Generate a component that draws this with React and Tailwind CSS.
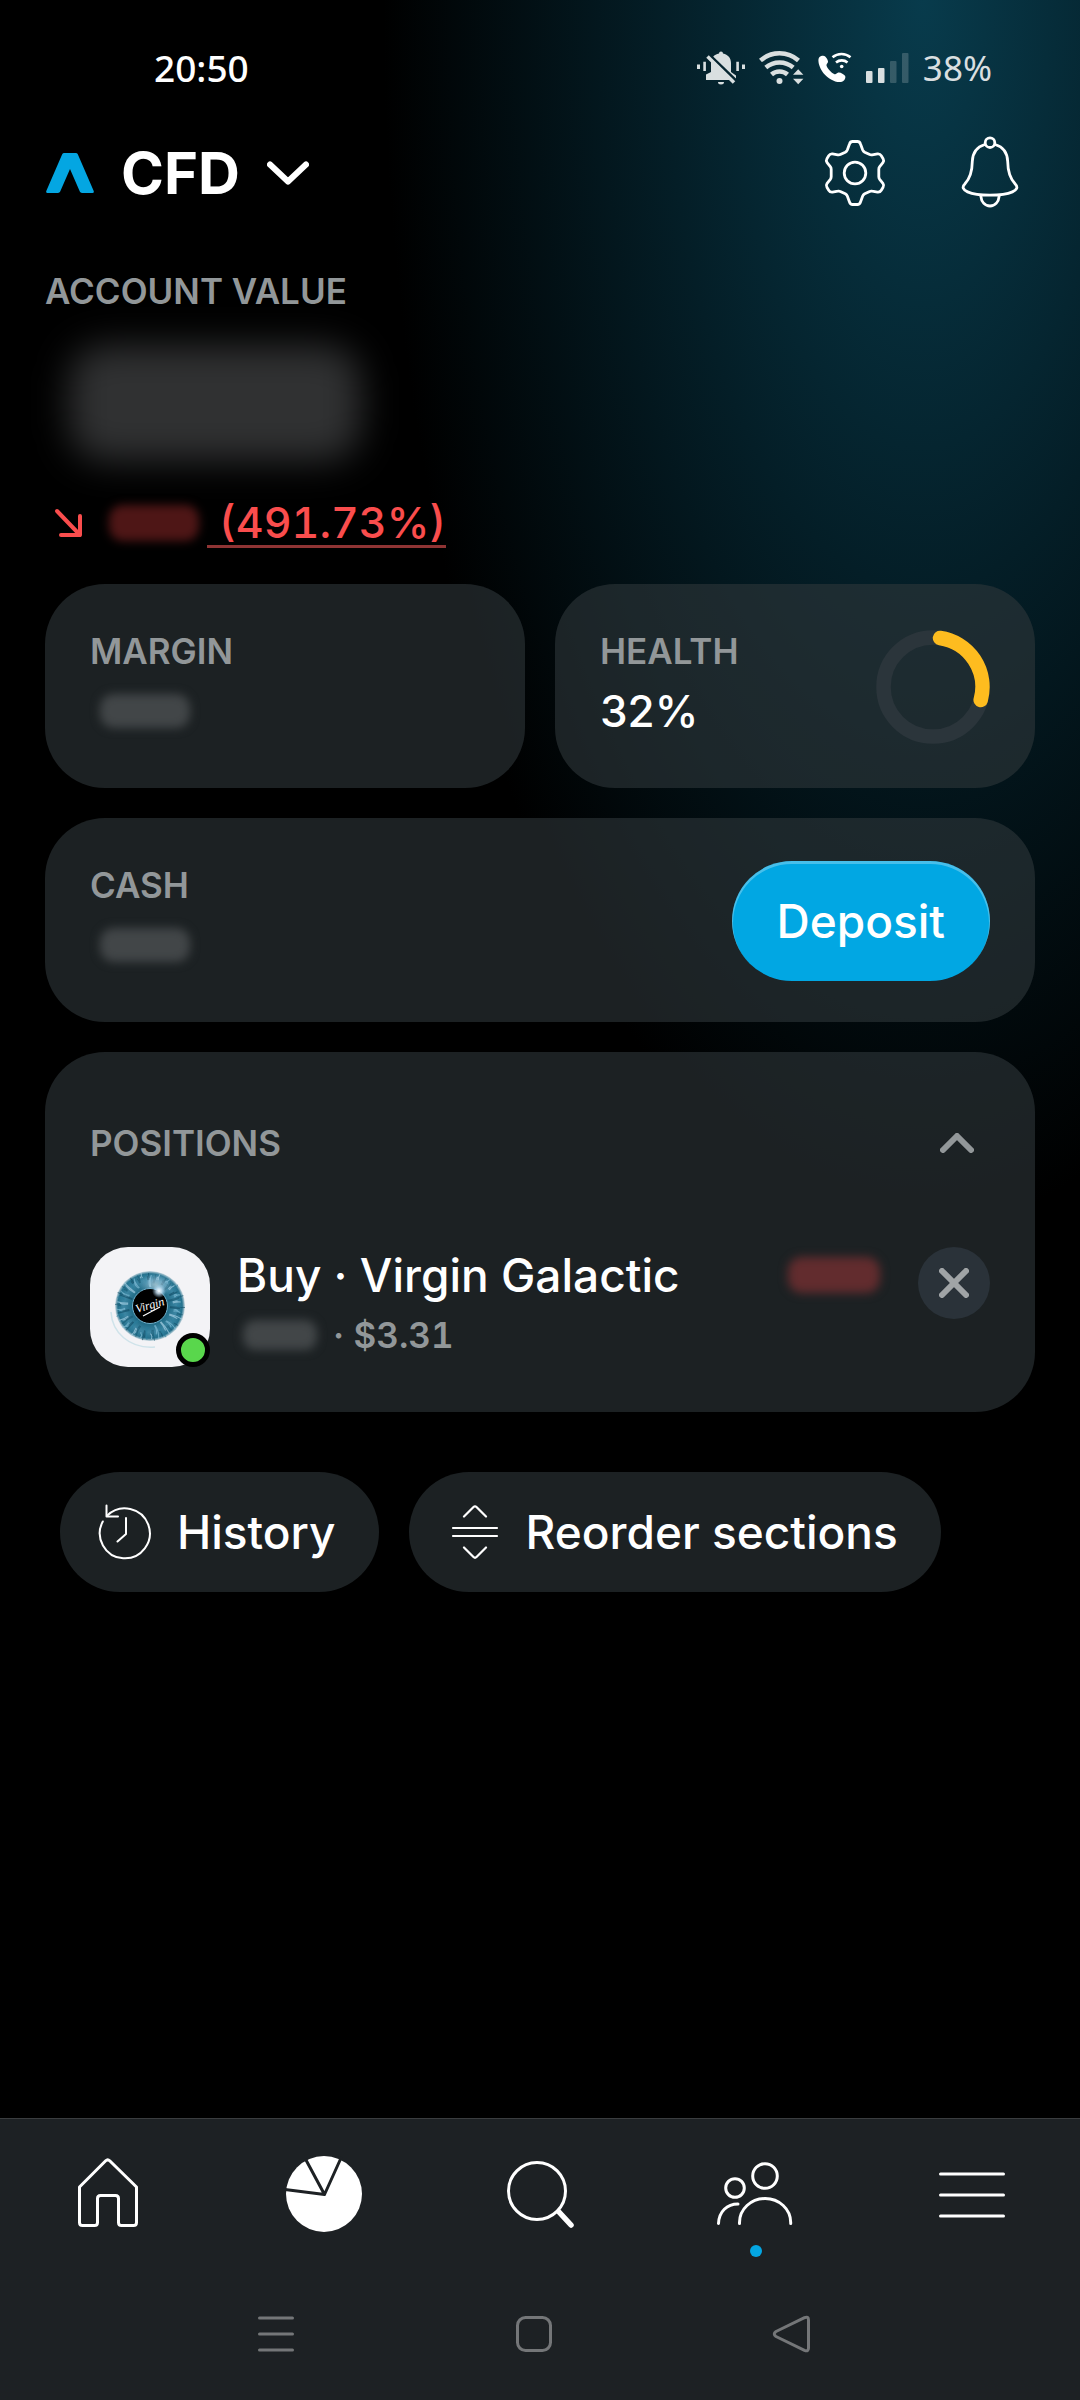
import { useState } from 'react';
import clsx from 'clsx';

const card = 'rounded-[60px] bg-[rgba(46,55,58,0.6)]';
const label = 'text-[35px] leading-[48px] font-semibold text-[#929799]';

/* Status bar icons */

const MutedBellIcon = () => (
    <svg width="48" height="34" viewBox="0 0 48 34" fill="#d9dfe0">
        <mask id="slash">
            <rect width="48" height="34" fill="#fff" />
            <path d="M12 3.5 40 30.5" stroke="#000" strokeWidth="3" />
        </mask>
        <g mask="url(#slash)">
            <path d="M22 2.6a2 2 0 0 1 4 0c5 1 8 4.600 8 9.400v9l5 3.500V29H9v-5.500L14 21v-9c0-5 3-8.400 8-9.400Z" />
        </g>
        <path d="M21 31h6a3 2.500 0 0 1-6 0Z" />
        <path d="m10.500 5.500 26.500 26" stroke="#d9dfe0" strokeWidth="3.500" />
        <path d="M0 13.500h3v4.500H0zM6.300 10.700h2.600V20H6.300zM39.300 10.700h2.600V20h-2.600zM45 13.500h3v4.500h-3z" />
    </svg>
);

const WifiIcon = () => (
    <svg width="45" height="36" viewBox="0 0 45 36" fill="none" stroke="#d9dfe0" strokeWidth="4.500">
        <path d="M1.500 10.500a28.500 28.500 0 0 1 38 0" />
        <path d="M6.800 17.500a21 21 0 0 1 27.400 0" />
        <path d="M12.500 24.500a12 12 0 0 1 16 0" />
        <circle cx="20.500" cy="31" r="3" fill="#d9dfe0" stroke="none" />
        <path d="m39.200 19.300 5.200 5.500H34zM39.200 34.300l5.200-5.500H34z" fill="#d9dfe0" stroke="none" />
    </svg>
);

const WifiCallIcon = () => (
    <svg width="34" height="32" viewBox="0 0 34 32" fill="none" stroke="#fff">
        <path
            d="M1.500 5C3 3.600 6 3.300 7.200 4.400c1.600 1.500 3 4 2.800 5.600-.2 1.400-1.700 2-1.500 3.400.5 2.700 4.800 7.300 8 8.800 1.500.6 2.200-1.200 3.800-1.700 2-.5 5.600 1.700 6.700 3.300 1.200 2-.6 5-3 6-6 1.600-13.500-3-18.500-8.600C1.800 16.500-1.300 8 1.500 5Z"
            fill="#fff"
            stroke="none"
        />
        <path d="M14.500 5.300a14 14 0 0 1 18 0M18 10.500a9 9 0 0 1 11.500 0" strokeWidth="2.600" />
        <circle cx="23.700" cy="14.500" r="1.800" fill="#fff" stroke="none" />
    </svg>
);

const SignalIcon = () => (
    <svg width="43" height="30" viewBox="0 0 43 30">
        <g fill="#d9dfe0">
            <rect y="18" width="6.500" height="12" rx="1" />
            <rect x="12" y="15" width="6.500" height="15" rx="1" />
        </g>
        <g fill="#d9dfe0" fillOpacity="0.22">
            <rect x="24" y="8" width="6.500" height="22" rx="1" />
            <rect x="36" y="0" width="6.500" height="30" rx="1" />
        </g>
    </svg>
);

/* Header icons */

const BrandMark = () => (
    <svg width="48" height="40" viewBox="0 0 48 40">
        <path d="M18.200 0h11.600q1.400 0 2 1.300l15.800 36.500Q48.400 40 46.400 40H36q-1.600 0-2.200-1.400L24 16l-9.800 22.600Q13.600 40 12 40H1.600Q-.4 40 .4 37.800L16.200 1.300Q16.800 0 18.200 0Z" fill="#04a6e2" />
    </svg>
);

const GearIcon = () => (
    <svg width="84" height="84" viewBox="0 0 84 84" fill="none" stroke="#fff" strokeWidth="2.800" strokeLinejoin="round">
        <path d="M39.500 10.500h5q2.200 0 3 2.500l2.200 6q.6 1.400 2 2.200l5 2.400q1 .5 2.500.2l5.300-.9q2.500-.3 3.800 1.800l1.800 3q1.200 2-.2 4l-3.200 4q-.9 1.200-.9 2.500v7.600q0 1.300.9 2.500l3.200 4q1.400 2 .2 4l-1.800 3q-1.300 2.100-3.800 1.800l-5.300-.9q-1.500-.3-2.500.2l-5 2.400q-1.400.8-2 2.200l-2.200 6q-.8 2.500-3 2.500h-5q-2.200 0-3-2.500l-2.200-6q-.6-1.400-2-2.200l-5-2.400q-1-.5-2.500-.2l-5.300.9q-2.500.3-3.800-1.800l-1.800-3q-1.200-2 .2-4l3.200-4q.9-1.200.9-2.500v-7.600q0-1.300-.9-2.500l-3.200-4q-1.400-2-.2-4l1.800-3q1.300-2.100 3.800-1.800l5.300.9q1.500.3 2.500-.2l5-2.400q1.400-.8 2-2.200l2.200-6q.8-2.500 3-2.500Z" />
        <circle cx="42" cy="42" r="10.800" />
    </svg>
);

const BellIcon = () => (
    <svg width="84" height="84" viewBox="0 0 84 84" fill="none" stroke="#fff" strokeWidth="2.800" strokeLinecap="round">
        <circle cx="42" cy="11.700" r="4.800" />
        <path d="M36.800 13.500C28.500 16 24.600 22 24.300 30.500c-.1 10-1.800 16.500-7.500 22.500C10.600 59 22 64.200 42 64.200S73.400 59 67.200 53c-5.700-6-7.400-12.500-7.500-22.500C59.400 22 55.500 16 47.200 13.500" />
        <path d="M32.800 65c.6 6.200 4.400 10 9.200 10s8.600-3.800 9.200-10" />
    </svg>
);

/* Asset logo: a blue iris with a black pupil */

const fibreColors = ['#8cc6e0', '#17566f', '#b9def0', '#2c7f9c', '#0f4a63'];

const fibres = Array.from({ length: 110 }, (_, i) => ({
    angle: (i * 137.5) % 360,
    start: 19 + ((i * 7) % 11),
    end: 28 + ((i * 5) % 8),
    bend: ((i * 3) % 5) - 2,
    color: fibreColors[i % 5],
}));

const VirginLogo = () => (
    <svg width="120" height="120" viewBox="0 0 120 120" className="rounded-[38px] bg-[#f3f3f6]">
        <defs>
            <radialGradient id="iris" cx="0.500" cy="0.500" r="0.500">
                <stop offset="0.500" stopColor="#1f6a85" />
                <stop offset="0.750" stopColor="#3c86a3" />
                <stop offset="0.920" stopColor="#25728e" />
                <stop offset="1" stopColor="#25728e" stopOpacity="0.200" />
            </radialGradient>
            <radialGradient id="glint">
                <stop offset="0" stopColor="#fff" />
                <stop offset="0.400" stopColor="#cfe8fa" stopOpacity="0.800" />
                <stop offset="1" stopColor="#9fd0ee" stopOpacity="0" />
            </radialGradient>
        </defs>
        <path d="M21 65c1 20 18 37 44 35" fill="none" stroke="#cfe3ea" strokeWidth="1.500" />
        <circle cx="60" cy="59" r="35" fill="url(#iris)" />
        {fibres.map((f) => (
            <path
                key={f.angle}
                d={`M60 ${59 - f.start}q${f.bend} ${(f.start - f.end) / 2} 0 ${f.start - f.end}`}
                transform={`rotate(${f.angle} 60 59)`}
                stroke={f.color}
                strokeOpacity="0.600"
                strokeWidth="1.100"
                fill="none"
            />
        ))}
        <ellipse cx="66" cy="38" rx="17" ry="12" fill="url(#glint)" opacity="0.500" />
        <circle cx="60" cy="59" r="17.500" fill="#000" stroke="#6fb0cc" strokeWidth="1" />
        <circle cx="69" cy="44" r="7" fill="url(#glint)" />
        <text x="60" y="62" fill="#fff" fontSize="12" fontStyle="italic" fontFamily="Liberation Serif, serif" textAnchor="middle" transform="rotate(-16 60 59)">
            Virgin
        </text>
        <path d="m53 69 17-9" stroke="#fff" strokeWidth="1.200" />
    </svg>
);

const HistoryIcon = () => (
    <svg width="60" height="60" viewBox="0 0 60 60" fill="none" stroke="#fff" strokeWidth="2" strokeLinecap="round" strokeLinejoin="round">
        <path d="M6.800 19.500a25 25 0 1 0 4.500-6" />
        <path d="M10.500 3.500v11h11.500M30 16v16l-8.500 7.500" />
    </svg>
);

const ReorderIcon = () => (
    <svg width="60" height="60" viewBox="0 0 60 60" fill="none" stroke="#fff" strokeWidth="2.200" strokeLinecap="round" strokeLinejoin="round">
        <path d="M8 26h44M8 34h44M19 14.500 28.500 5q1.500-1.500 3 0l9.500 9.500M19 45.500l9.500 9.500q1.500 1.500 3 0l9.500-9.500" />
    </svg>
);

/* Bottom tabs, all on an 84px box */

const tabs = [
    {
        name: 'Home',
        icon: <path d="m13.500 35 26.200-26.200q2-2 4 0L70.500 35v35.500q0 3-3 3h-12q-3 0-3-3v-24q0-3-3-3h-15q-3 0-3 3v24q0 3-3 3h-12q-3 0-3-3Z" />,
    },
    {
        name: 'Portfolio',
        icon: (
            <>
                <circle cx="42" cy="42" r="38" fill="#fff" stroke="none" />
                <path d="M24 8l18.500 34.500L59 6M3 37.500l39.500 5" stroke="#1d2124" />
            </>
        ),
    },
    {
        name: 'Search',
        icon: (
            <>
                <circle cx="39" cy="39" r="28.500" />
                <path d="m61 60 12 13" strokeWidth="5.500" />
            </>
        ),
    },
    {
        name: 'Community',
        badge: true,
        icon: (
            <>
                <circle cx="51" cy="24" r="12.300" />
                <circle cx="21" cy="36" r="9.300" />
                <path d="M25.500 71.500v-1a25.600 24 0 0 1 51.200 0v1M4.500 71.500C5 59.500 13 52 24 52" />
            </>
        ),
    },
    { name: 'Menu', icon: <path d="M10.500 22h63M10.500 43h63M10.500 64h63" /> },
];

const systemKeys = [
    { name: 'Recent apps', icon: <path d="M7.500 8h33M7.500 24h33M7.500 40h33" /> },
    { name: 'Home screen', icon: <rect x="7.500" y="7.500" width="33" height="33" rx="8" /> },
    { name: 'Back', icon: <path d="M8 21.500 36.500 7.700q4-1.700 4 2.300v28q0 4-4 2.300L8 26.500q-3.500-2.500 0-5Z" /> },
];

const Redacted = ({ className }) => <span aria-hidden="true" className={clsx('block shrink-0', className)} />;

const HealthRing = () => (
    <svg width="114" height="114" viewBox="0 0 114 114" fill="none" strokeWidth="14.500">
        <circle cx="57" cy="57" r="49.500" stroke="#2b353b" />
        <path d="M64 8a49.500 49.500 0 0 1 40.700 62" stroke="#febc1f" strokeLinecap="round" />
    </svg>
);

const App = () => {
    const [activeTab, setActiveTab] = useState('Portfolio');
    const [open, setOpen] = useState(true);

    return (
        <div className="flex min-h-screen flex-col bg-black bg-[radial-gradient(ellipse_540px_1230px_at_923px_0px,#083b4c_0%,#041e27_48%,#000_100%)] font-['Inter',sans-serif] text-white">
            {/* Status bar */}
            <div className="flex h-[138px] items-center justify-between pr-[88px] pb-0.5 pl-[154px] font-['Noto_Sans',sans-serif] leading-[48px]">
                <span className="text-[37px] font-medium">20:50</span>
                <div className="flex items-center gap-[14px] text-[35px] text-[#d9dfe0]">
                    <MutedBellIcon />
                    <WifiIcon />
                    <WifiCallIcon />
                    <SignalIcon />
                    <span>38%</span>
                </div>
            </div>

            <header className="flex h-[70px] items-center justify-between pr-12 pl-[46px]">
                <button className="flex items-center gap-[27px]">
                    <BrandMark />
                    <span className="text-[58px] leading-[64px] font-bold">CFD</span>
                    <svg width="42" height="24" viewBox="0 0 42 24" fill="none" stroke="#fff" strokeWidth="6" strokeLinecap="round" strokeLinejoin="round">
                        <path d="m3 3.500 18 17 18-17" />
                    </svg>
                </button>
                <div className="flex items-center gap-[51px]">
                    <button aria-label="Settings"><GearIcon /></button>
                    <button aria-label="Notifications"><BellIcon /></button>
                </div>
            </header>

            <main className="flex flex-col px-[45px] pt-[59px]">
                <h2 className={label}>ACCOUNT VALUE</h2>
                <Redacted className="mt-[30px] ml-6 h-[116px] w-[292px] rounded-[36px] bg-[#303132] blur-[18px]" />

                <div className="mt-[34px] flex h-[56px] items-center text-[43px] leading-[56px] font-medium text-[#fa4d4d]">
                    <svg className="ml-2" width="32" height="32" viewBox="0 0 32 32" fill="none" stroke="#fa4d4d" strokeWidth="4" strokeLinecap="round" strokeLinejoin="round">
                        <path d="m4 4 23 24M27 9v19H8" />
                    </svg>
                    <Redacted className="ml-6 h-[36px] w-[90px] rounded-[14px] bg-[#4e1616] blur-[5px]" />
                    <a href="#performance" className="ml-2 border-b-3 border-[#8f3434] pl-3 leading-[46px] tabular-nums">
                        (491.73%)
                    </a>
                </div>

                <div className="mt-[33px] grid grid-cols-2 gap-[30px]">
                    <section className={clsx(card, 'px-[45px] pt-[43px] pb-[41px]')}>
                        <h2 className={label}>MARGIN</h2>
                        <div className="flex h-[72px] items-center">
                            <Redacted className="ml-[10px] h-[34px] w-[90px] rounded-[14px] bg-[#424648] blur-[5px]" />
                        </div>
                    </section>
                    <section className={clsx(card, 'flex items-center justify-between px-[45px] pt-[43px] pb-[41px]')}>
                        <div>
                            <h2 className={label}>HEALTH</h2>
                            <div className="text-[44px] leading-[72px] font-medium">32%</div>
                        </div>
                        <HealthRing />
                    </section>
                </div>

                <section className={clsx(card, 'mt-[30px] flex items-center justify-between px-[45px] pt-[43px] pb-[41px]')}>
                    <div>
                        <h2 className={label}>CASH</h2>
                        <div className="flex h-[72px] items-center">
                            <Redacted className="ml-[10px] h-[34px] w-[90px] rounded-[14px] bg-[#424648] blur-[5px]" />
                        </div>
                    </div>
                    <button className="h-[120px] rounded-full bg-[#01a7e3] px-[45px] text-[46px] leading-[56px] font-medium shadow-[inset_0_2px_0_1px_rgba(255,255,255,0.28)]">
                        Deposit
                    </button>
                </section>

                <section className={clsx(card, 'mt-[30px] px-[45px] pt-[67px] pb-[45px]')}>
                    <button onClick={() => setOpen(!open)} aria-expanded={open} className="flex w-full items-center justify-between pr-4">
                        <span className={label}>POSITIONS</span>
                        <svg className={clsx(!open && 'rotate-180')} width="34" height="20" viewBox="0 0 34 20" fill="none" stroke="#929799" strokeWidth="6" strokeLinecap="round" strokeLinejoin="round">
                            <path d="M3 17 17 3l14 14" />
                        </svg>
                    </button>
                    {open && (
                        <div className="mt-20 flex items-start">
                            <div className="relative">
                                <VirginLogo />
                                <span className="absolute right-0 bottom-0 size-[34px] rounded-full border-5 border-black bg-[#59d74c]" />
                            </div>
                            <div className="ml-[27px] flex-1">
                                <div className="text-[46px] leading-[56px] font-medium">Buy · Virgin Galactic</div>
                                <div className="mt-2 flex items-center text-[35px] leading-[48px] font-semibold text-[#929799]">
                                    <Redacted className="mr-4 ml-[6px] h-[30px] w-[74px] rounded-[12px] bg-[#424648] blur-[5px]" />
                                    <span className="tabular-nums">· $3.31</span>
                                </div>
                            </div>
                            <div className="flex h-[56px] items-center">
                                <Redacted className="h-[36px] w-[92px] rounded-[14px] bg-[#622c2e] blur-[5px]" />
                            </div>
                            <button aria-label="Close position" className="ml-[38px] flex size-[72px] items-center justify-center rounded-full bg-[#2a3239]">
                                <svg width="30" height="30" viewBox="0 0 30 30" fill="none" stroke="#a0a4a6" strokeWidth="6" strokeLinecap="round">
                                    <path d="m3 3 24 24M27 3 3 27" />
                                </svg>
                            </button>
                        </div>
                    )}
                </section>

                <div className="mt-[60px] flex gap-[30px] pl-[15px] text-[46px] leading-[56px] font-medium">
                    <button className="flex h-[120px] items-center gap-[21px] rounded-full bg-[#1c2123] pr-[43px] pl-9">
                        <HistoryIcon />
                        History
                    </button>
                    <button className="flex h-[120px] items-center gap-[21px] rounded-full bg-[#1c2123] pr-[43px] pl-9">
                        <ReorderIcon />
                        Reorder sections
                    </button>
                </div>
            </main>

            <footer className="mt-auto border-t border-[#3a3d3f] bg-[#1d2124] pt-[33px] pb-[42px]">
                <nav className="grid h-[106px] grid-cols-5">
                    {tabs.map((tab) => (
                        <button
                            key={tab.name}
                            aria-label={tab.name}
                            aria-current={tab.name === activeTab ? 'page' : undefined}
                            onClick={() => setActiveTab(tab.name)}
                            className="flex flex-col items-center gap-[9px]"
                        >
                            <svg width="84" height="84" viewBox="0 0 84 84" fill="none" stroke="#fff" strokeWidth="3" strokeLinecap="round" strokeLinejoin="round">
                                {tab.icon}
                            </svg>
                            {tab.badge && <span className="size-3 rounded-full bg-[#04a6e2]" />}
                        </button>
                    ))}
                </nav>
                <div className="mt-[52px] flex justify-center gap-[210px] pr-3">
                    {systemKeys.map((key) => (
                        <button key={key.name} aria-label={key.name}>
                            <svg width="48" height="48" viewBox="0 0 48 48" fill="none" stroke="#747678" strokeWidth="3" strokeLinecap="round" strokeLinejoin="round">
                                {key.icon}
                            </svg>
                        </button>
                    ))}
                </div>
            </footer>
        </div>
    );
};

export default App;
